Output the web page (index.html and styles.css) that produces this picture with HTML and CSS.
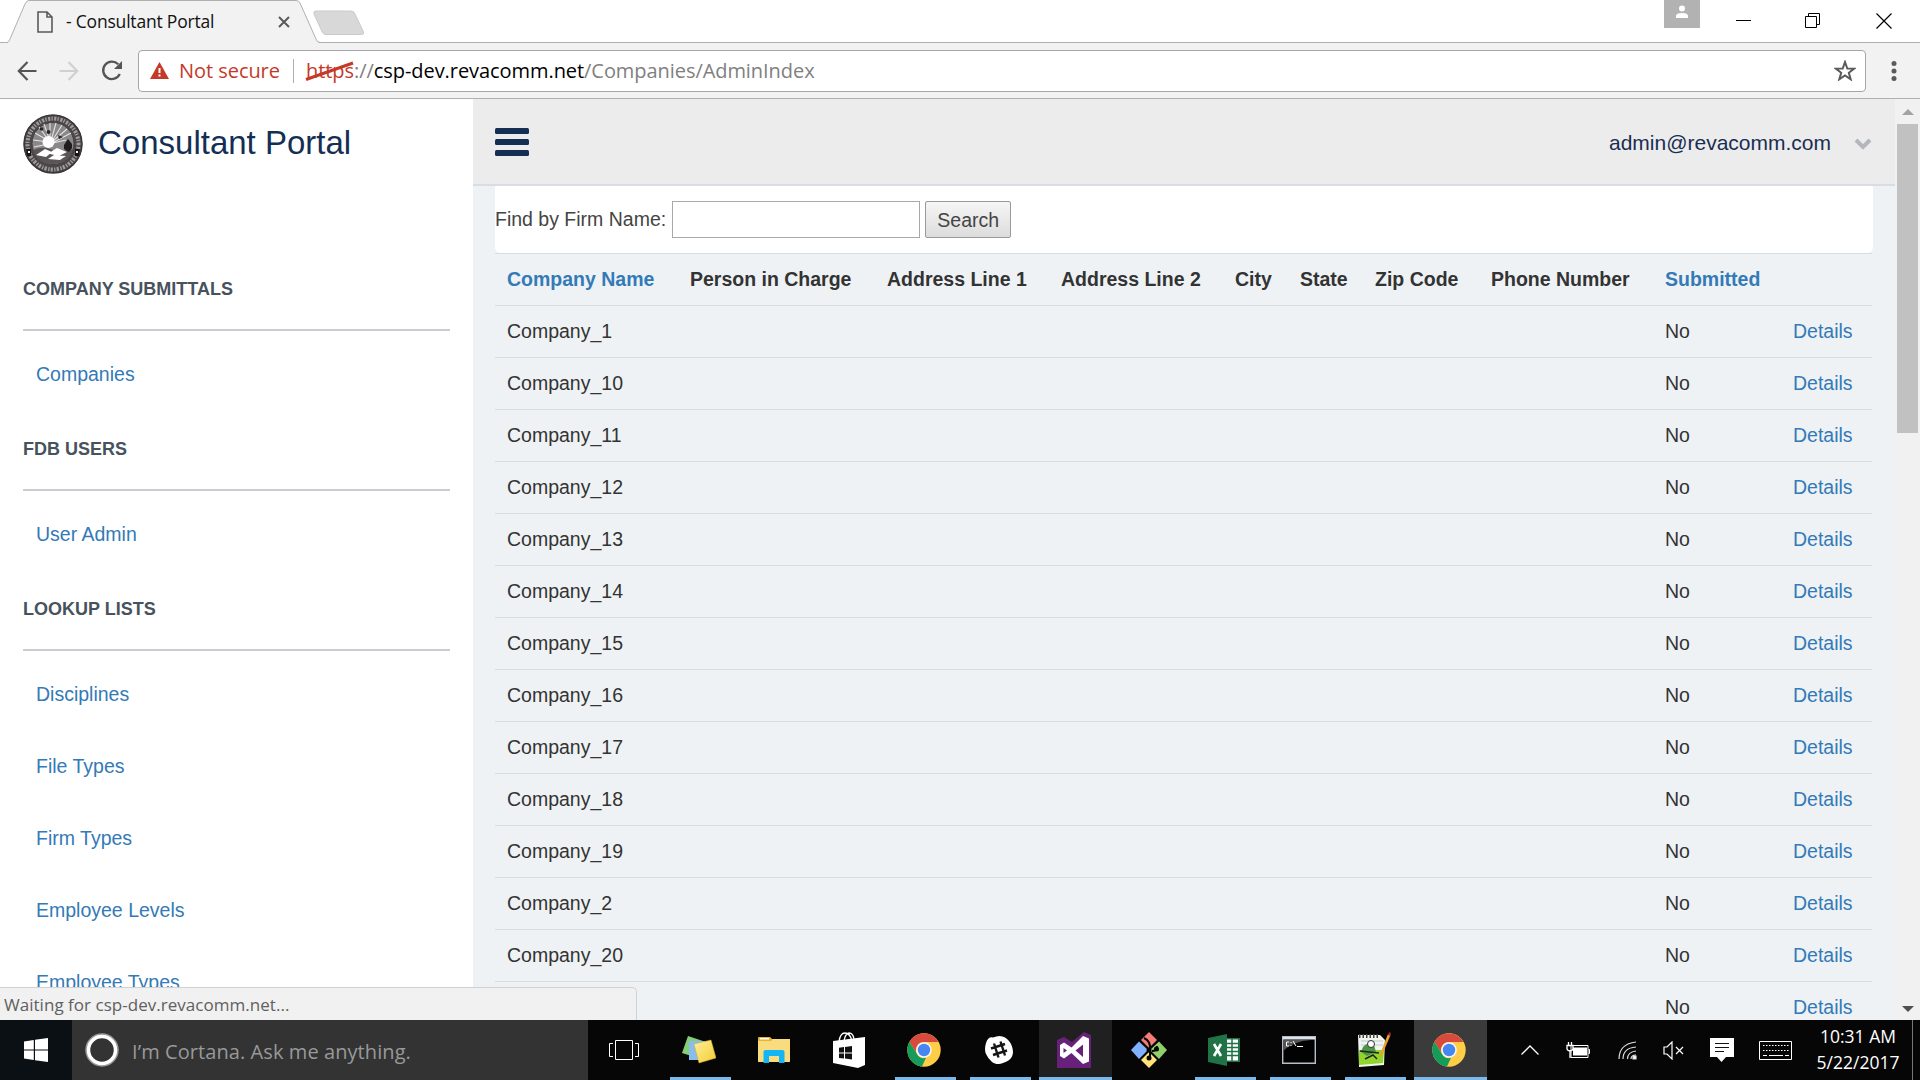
FILE: index.html
```html
<!DOCTYPE html>
<html lang="en">
<head>
<meta charset="utf-8">
<title>- Consultant Portal</title>
<link rel="stylesheet" href="styles.css">
</head>
<body>
<div class="desktop">
  <header class="titlebar">
    <div class="tab">
      <svg class="tab-shape" width="322" height="43" viewBox="0 0 322 43"><path d="M0 43 L1 42.5 Q2 42 3 39 L18 4 Q19.500 .5 22 .5 H289 Q292 .5 293 3 L309 39 Q310 42.500 312 42.500 V43Z" fill="#f2f2f2"/><path d="M0 42.500 Q2 42 3 39 L18 4 Q19.500 .5 22 .5 H289 Q292 .5 293 3 L309 39 Q310 42.500 313 42.500 H322" fill="none" stroke="#b0b0b0"/></svg>
      <svg class="page-icon" width="16" height="22" viewBox="0 0 16 22" fill="none" stroke="#5a5a5a" stroke-width="1.600"><path d="M1 1h9l5 5v15H1zM10 1v5h5"/></svg>
      <span class="tab-title">- Consultant Portal</span>
      <svg class="tab-close" width="12" height="12" viewBox="0 0 12 12" stroke="#5a5a5a" stroke-width="2"><path d="M1 1l10 10M11 1L1 11"/></svg>
    </div>
    <svg class="new-tab" width="52" height="26" viewBox="0 0 52 26"><path d="M3 1h35q3 0 4 3l8.500 18q1 2.500-2 2.500H13q-3 0-4-3L1 4q-1-3 2-3z" fill="#d8d8d8" stroke="#cacaca"/></svg>
    <div class="window-buttons">
      <div class="profile"><svg width="14" height="14" viewBox="0 0 14 14" fill="#fff"><circle cx="7" cy="3.500" r="3"/><path d="M1 13v-2q0-3 6-3t6 3v2z"/></svg></div>
      <svg class="win min" width="15" height="16" viewBox="0 0 15 16"><path d="M0 7.500h15" stroke="#000"/></svg>
      <svg class="win" width="16" height="16" viewBox="0 0 16 16" fill="none" stroke="#000"><path d="M.5 3.500h11v11H.5zM3.500 3.500V.5h11v11h-3"/></svg>
      <svg class="win" width="16" height="16" viewBox="0 0 16 16" stroke="#000" stroke-width="1.200"><path d="M.5.5l15 15M15.500.5l-15 15"/></svg>
    </div>
  </header>
  <nav class="toolbar">
    <svg class="tool back" width="20" height="20" viewBox="0 0 20 20" fill="none" stroke="#555" stroke-width="2.200"><path d="M19.500 10H2M10.500 1L1.800 10l8.700 9"/></svg>
    <svg class="tool forward" width="20" height="20" viewBox="0 0 20 20" fill="none" stroke="#d0d0d0" stroke-width="2.200"><path d="M.5 10H18M9.500 1l8.700 9-8.700 9"/></svg>
    <svg class="tool reload" width="22" height="22" viewBox="0 0 22 22"><path d="M17.200 4.300A8.700 8.700 0 1 0 18.800 14" fill="none" stroke="#555" stroke-width="2.300"/><path d="M21 1v8h-8z" fill="#555"/></svg>
    <div class="omnibox">
      <svg width="19" height="17" viewBox="0 0 19 17"><path d="M9.500 0L19 17H0z" fill="#c53929"/><path d="M9.500 6v5M9.500 12.500v2" stroke="#fff" stroke-width="2"/></svg>
      <span class="not-secure">Not secure</span>
      <span class="divider"></span>
      <span class="url"><span class="scheme">https<svg class="strike" width="50" height="20" viewBox="0 0 50 20"><path d="M1 18.500L48 2" stroke="#c53929" stroke-width="3"/></svg></span>://<span class="host">csp-dev.revacomm.net</span>/Companies/AdminIndex</span>
      <svg class="star" width="22" height="21" viewBox="0 0 22 21"><path d="M11 2l2.300 6.500 6.900.1-5.400 4.200 1.900 6.500L11 15.500l-5.700 3.800 1.900-6.500L1.800 8.600l6.900-.1z" fill="none" stroke="#5a5a5a" stroke-width="2"/></svg>
    </div>
    <svg class="dots" width="6" height="20" viewBox="0 0 6 20" fill="#5a5a5a"><circle cx="3" cy="2.500" r="2.500"/><circle cx="3" cy="10" r="2.500"/><circle cx="3" cy="17.500" r="2.500"/></svg>
  </nav>
  <div class="page">
    <aside class="sidebar">
      <div class="brand">
        <svg class="seal" width="60" height="60" viewBox="0 0 60 60"><circle cx="30" cy="30" r="29.500" fill="#4b4748"/><circle cx="30" cy="30" r="25.500" fill="none" stroke="#a09c9d" stroke-width="4" stroke-dasharray="1.300 1.500 2.200 1.200"/><circle cx="30" cy="30" r="29" fill="none" stroke="#393537" stroke-width="1.200"/><circle cx="30" cy="29.500" r="21" fill="#8b8889" stroke="#444041"/><g stroke="#e4e4e4" stroke-width="1.100"><path d="M26 27L12 19M26 27L16 13M27 27V9M27 27l-6-17M28 27l5-18M29 27l10-16M30 27l14-12M31 28l17-9M26 28L10 26M30 29l13-3M25 30l-14 3"/></g><path d="M10 36q9-4 17-1t23 0q-3 14-19 15T10 36z" fill="#5a5657"/><circle cx="25.500" cy="28" r="6" fill="#fff"/><path d="M13 41l9-6 7 3-6 5zM29 37l5-3 10 4-8 4-9-2zM25 45l6-4 12 1-6 4z" fill="#fff"/><path d="M41 31l4-6 4 5v4l-3 4-5-3z" fill="#211d1f"/><circle cx="18.500" cy="15" r="1.800" fill="#292527"/><circle cx="25.500" cy="18" r="2" fill="#292527"/><path d="M35 21l5 2-4 2z" fill="#292527"/><path d="M3 35h5v7H4zM52 35h5l-1 7h-4z" fill="#171516"/><path d="M5 37h2v2H5zM53 37h2v2h-2z" fill="#fff"/></svg>
        <h1>Consultant Portal</h1>
      </div>
      <section><h2>COMPANY SUBMITTALS</h2><a>Companies</a></section>
      <section><h2>FDB USERS</h2><a>User Admin</a></section>
      <section><h2>LOOKUP LISTS</h2><a>Disciplines</a><a>File Types</a><a>Firm Types</a><a>Employee Levels</a><a>Employee Types</a></section>
    </aside>
    <main>
      <div class="topbar">
        <svg width="34" height="28" viewBox="0 0 34 28" fill="#152f54"><rect width="34" height="6" rx="1.500"/><rect y="11" width="34" height="6" rx="1.500"/><rect y="22" width="34" height="6" rx="1.500"/></svg>
        <span class="user">admin@revacomm.com</span>
        <svg class="chevron" width="18" height="12" viewBox="0 0 18 12"><path d="M2 2l7 7 7-7" fill="none" stroke="#b3b7bb" stroke-width="4"/></svg>
      </div>
      <div class="content">
        <form class="search"><label for="firm">Find by Firm Name:</label><input id="firm" type="text"><button type="button">Search</button></form>
        <table>
          <colgroup><col class="c-name"><col class="c-person"><col class="c-addr"><col class="c-addr"><col class="c-city"><col class="c-state"><col class="c-zip"><col class="c-phone"><col class="c-sub"><col class="c-link"></colgroup>
          <thead><tr><th class="link">Company Name</th><th>Person in Charge</th><th>Address Line 1</th><th>Address Line 2</th><th>City</th><th>State</th><th>Zip Code</th><th>Phone Number</th><th class="link">Submitted</th><th></th></tr></thead>
          <tbody>
            <tr><td colspan="8">Company_1</td><td>No</td><td class="link">Details</td></tr>
            <tr><td colspan="8">Company_10</td><td>No</td><td class="link">Details</td></tr>
            <tr><td colspan="8">Company_11</td><td>No</td><td class="link">Details</td></tr>
            <tr><td colspan="8">Company_12</td><td>No</td><td class="link">Details</td></tr>
            <tr><td colspan="8">Company_13</td><td>No</td><td class="link">Details</td></tr>
            <tr><td colspan="8">Company_14</td><td>No</td><td class="link">Details</td></tr>
            <tr><td colspan="8">Company_15</td><td>No</td><td class="link">Details</td></tr>
            <tr><td colspan="8">Company_16</td><td>No</td><td class="link">Details</td></tr>
            <tr><td colspan="8">Company_17</td><td>No</td><td class="link">Details</td></tr>
            <tr><td colspan="8">Company_18</td><td>No</td><td class="link">Details</td></tr>
            <tr><td colspan="8">Company_19</td><td>No</td><td class="link">Details</td></tr>
            <tr><td colspan="8">Company_2</td><td>No</td><td class="link">Details</td></tr>
            <tr><td colspan="8">Company_20</td><td>No</td><td class="link">Details</td></tr>
            <tr><td colspan="8"></td><td>No</td><td class="link">Details</td></tr>
          </tbody>
        </table>
      </div>
    </main>
    <div class="scrollbar">
      <svg width="12" height="6" viewBox="0 0 12 6"><path d="M0 6l6-6 6 6z" fill="#a3a3a3"/></svg>
      <div class="thumb"></div>
      <svg class="down" width="12" height="6" viewBox="0 0 12 6"><path d="M0 0l6 6 6-6z" fill="#505050"/></svg>
    </div>
    <div class="status">Waiting for csp-dev.revacomm.net...</div>
  </div>
  <footer class="taskbar">
    <div class="start"><svg width="24" height="24" viewBox="0 0 24 24" fill="#fff"><path d="M0 3.400L9.800 2v9.500H0zM11 1.800L24 0v11.500H11zM0 12.500h9.800V22L0 20.600zM11 12.500h13V24l-13-1.800z"/></svg></div>
    <div class="cortana"><svg width="34" height="34" viewBox="0 0 34 34" fill="none"><circle cx="17" cy="17" r="15.500" stroke="#999" stroke-width="2.500"/><circle cx="17" cy="17" r="13.500" stroke="#fff" stroke-width="3.500"/></svg><span>I’m Cortana. Ask me anything.</span></div>
    <div class="apps">
      <div class="app taskview"><svg width="30" height="20" viewBox="0 0 30 20" fill="none" stroke="#fff"><path d="M6.500.5h17v19h-17zM4 3.500H.5v13H4M26 3.500h3.500v13H26"/></svg></div>
      <div class="app run"><svg width="34" height="28" viewBox="0 0 34 28"><defs><linearGradient id="note" x1="0" y1="0" x2="1" y2="1"><stop stop-color="#fff09a"/><stop offset="1" stop-color="#f3cd35"/></linearGradient></defs><path d="M6 0l15 5-5 17-16-5z" fill="#84cf76"/><path d="M7 5h16v19H7z" fill="#8bbdec"/><path d="M12 8l17-4 5 18-17 5z" fill="url(#note)" stroke="#d2ab22" stroke-width=".5"/></svg></div>
      <div class="app"><svg width="32" height="28" viewBox="0 0 32 28"><path d="M0 2q0-1 1-1h11l2 2h17q1 0 1 1v21q0 1-1 1H1q-1 0-1-1z" fill="#e8b531"/><path d="M0 5h13l2-2h17v22q0 1-1 1H1q-1 0-1-1z" fill="#f9dc7d"/><path d="M2 2h9v1.500H2z" fill="#fff"/><path d="M5.500 27V16q0-2 2-2h17q2 0 2 2v11H21v-7H11v7z" fill="#13b5f4"/></svg></div>
      <div class="app"><svg width="32" height="36" viewBox="0 0 32 36"><path d="M6 10Q7 1 12 1t7 8M11 9q1-7 5-8 4 0 5 6" fill="none" stroke="#fff" stroke-width="1.300"/><path d="M0 9l32-4v28l-7 3L0 31z" fill="#fff"/><path d="M6 15.800l5-.7v5.400H6zM12 15l7-1v6.500h-7zM6 21.500h5v5l-5-.6zM12 21.500h7v6l-7-.9z" fill="#111"/></svg></div>
      <div class="app run"><svg width="34" height="34" viewBox="0 0 34 34"><g id="chrome"><circle cx="17" cy="17" r="16.700" fill="#ffcd46"/><path d="M2.500 8.700A16.700 16.700 0 0 1 31.500 9H17a8 8 0 0 0-7 12z" fill="#d84a3e"/><path d="M2.500 8.700l7.600 12.500A8 8 0 0 0 19 24.800l-4 8.800A16.700 16.700 0 0 1 2.500 8.700z" fill="#159c5a"/><circle cx="17" cy="17" r="7.800" fill="#f5f5f5"/><circle cx="17" cy="17" r="6.200" fill="#4586f0"/></g></svg></div>
      <div class="app run"><svg width="28" height="28" viewBox="0 0 28 28"><path d="M8 1.500q7-3 12 0t7 9 0 10-9 6.500-11-1-6-8 0-11 7-5.500z" fill="#fff"/><path d="M9 7.500l4.500 14M15.500 5.500l4.500 14M6 12.500l14-4.500M8 19l14-4.500" stroke="#151515" stroke-width="2.400"/></svg></div>
      <div class="app run active vs"><svg width="34" height="36" viewBox="0 0 34 36"><path d="M0 8l7-3 8 5L27 0l7 3v33H0z" fill="#68217a"/><path d="M3 13l4-2.500 7.500 5L26 4l6 2.500v23L26 32 14.500 21 7 26.500 3 24zm3.500 3v5l3.500-2.500zM26 12.500l-7.500 6L26 25z" fill="#fff" fill-rule="evenodd"/></svg></div>
      <div class="app"><svg width="36" height="36" viewBox="0 0 36 36"><path d="M18 0l8 8-8 8-8-8z" fill="#f77b77"/><path d="M8 9.500l9 8.500-9 9L0 18z" fill="#80b1ff"/><path d="M28 9.500l8 8.500-8 9-9-9z" fill="#90d069"/><path d="M18 20l8 8-8 8-8-8z" fill="#ffe47a"/><path d="M13 6q7 3 6 12v9M21 19q5 0 5-5" fill="none" stroke="#050505" stroke-width="2"/><circle cx="18" cy="18" r="2.500" fill="#050505"/><circle cx="25.500" cy="17" r="2.500" fill="#050505"/><circle cx="18" cy="26" r="2.500" fill="#050505"/></svg></div>
      <div class="app run"><svg width="32" height="32" viewBox="0 0 32 32"><path d="M17 4h15v24H17z" fill="#1f7245"/><path d="M18 5.500h12v21H18z" fill="#fff"/><path d="M24 5v22M18 9.500h12M18 13.500h12M18 17.500h12M18 21.500h12" stroke="#1f7245" stroke-width="1.500"/><path d="M0 4l19-4v32L0 28z" fill="#207346"/><path d="M6 10l7 12M13 10L6 22" stroke="#fff" stroke-width="2.600"/></svg></div>
      <div class="app run"><svg width="34" height="28" viewBox="0 0 34 28"><path d="M.7.7h32.600v26.600H.7z" fill="#020202" stroke="#b8bec5" stroke-width="1.400"/><path d="M1 1h32v2.500H1z" fill="#dce3eb"/><path d="M1 4h28q-17 1-28 11z" fill="#555"/><path d="M7 6H4.500v4H7M9 6v1M9 9v1M11 5l3 5M15 10.500h6" fill="none" stroke="#fff"/></svg></div>
      <div class="app run"><svg width="34" height="36" viewBox="0 0 34 36"><path d="M1 3h22l5 5-1 25-25 2z" fill="#f1f5ee"/><path d="M2 18h25l-1 13-24 2z" fill="#92d52d"/><path d="M2 3h21M2 5h21" stroke="#444" stroke-width="2" stroke-dasharray="1.500 2"/><path d="M4 9h22M4 13h22" stroke="#b7cddb"/><path d="M6 15q5-6 11-2l2 7-9 4-6-4z" fill="#4c9745"/><circle cx="14" cy="12" r="3.500" fill="#fff" stroke="#333"/><path d="M3 19l19 2M8 27l8-4 4 4" stroke="#222" stroke-width="1.500" fill="none"/><path d="M22 26l1.500-5L31 2l2.500 1-8 19z" fill="#e9a328"/><path d="M31 3l1-3 2 1-.5 3z" fill="#a3202d"/></svg></div>
      <div class="app run active"><svg width="34" height="34" viewBox="0 0 34 34"><use href="#chrome"/></svg></div>
    </div>
    <div class="tray">
      <svg class="caret" width="18" height="10" viewBox="0 0 18 10" fill="none" stroke="#fff" stroke-width="1.300"><path d="M.5 9.500L9 1l8.500 8.500"/></svg>
      <svg class="battery" width="24" height="18" viewBox="0 0 24 18"><path d="M5 4.500h17v12H5zM22.500 8.500h1v4h-1" fill="none" stroke="#fff"/><path d="M7 6.500h14v8H7z" fill="#fff"/><path d="M2.500 1v3M5.500 1v3M1 4.500h6v3q0 2-3 2.500-3-.5-3-2.500zM4 10v7" fill="none" stroke="#fff" stroke-width="1.300"/></svg>
      <svg class="wifi" width="19" height="19" viewBox="0 0 19 19" fill="none" stroke="#ddd" stroke-width="1.200"><path d="M1 18Q1 3 18 1M5 18Q5 7 18 6M9.500 18q0-7 8.500-8M13 18q0-4 5-4"/><path d="M15 15h3v3h-3z" fill="#fff"/></svg>
      <svg class="volume" width="21" height="19" viewBox="0 0 21 19" fill="none" stroke="#fff" stroke-width="1.200"><path d="M1 6h3l5-5v17l-5-5H1zM13 6l7 7M20 6l-7 7"/></svg>
      <svg class="message" width="24" height="24" viewBox="0 0 24 24"><path d="M0 0h24v19h-8l-4.500 5L7 19H0z" fill="#fff"/><path d="M5 5.500h14M5 9.500h14M5 13.500h9" stroke="#111"/></svg>
      <svg class="keyboard" width="33" height="19" viewBox="0 0 33 19" fill="none" stroke="#fff"><path d="M.5.500h32v18H.5z"/><path d="M4 4.500h26M4 9.500h26" stroke-dasharray="1.500 1.500"/><path d="M4 14.500h4M10 14.500h14M26 14.500h4"/></svg>
      <div class="clock"><span>10:31 AM</span><span>5/22/2017</span></div>
      <span class="show-desktop"></span>
    </div>
  </footer>
</div>
</body>
</html>
```

FILE: styles.css
```css
* { box-sizing: border-box; }
body { margin: 0; font-family: "Liberation Sans", Arial, sans-serif; overflow: hidden; }
svg { display: block; flex: none; }
.desktop { width: 1920px; height: 1080px; display: flex; flex-direction: column; background: #fff; }

/* Browser chrome */
.titlebar { height: 43px; flex: none; display: flex; border-bottom: 1px solid #b0b0b0; font-family: "Open Sans", "Noto Sans", sans-serif; }
.tab { position: relative; width: 322px; height: 43px; margin-left: 7px; display: flex; align-items: center; padding-left: 30px; }
.tab-shape { position: absolute; left: 0; top: 0; }
.page-icon, .tab-title, .tab-close { position: relative; }
.tab-title { margin-left: 13px; width: 212px; padding-bottom: 1px; font-size: 17.500px; letter-spacing: -.2px; color: #111; white-space: nowrap; }
.new-tab { margin: 10px 0 0 -16px; }
.window-buttons { margin-left: auto; display: flex; padding-right: 28px; }
.profile { width: 36px; height: 28px; background: #b2b2b2; display: flex; justify-content: center; padding-top: 5px; margin-right: 36px; }
.win { margin-top: 13px; margin-left: 55px; }
.win.min { margin-left: 0; margin-right: -1px; }
.toolbar { height: 56px; flex: none; display: flex; align-items: center; background: #f2f2f2; border-bottom: 1px solid #b0b0b0; font-family: "Open Sans", "Noto Sans", sans-serif; padding-left: 17px; }
.forward { margin-left: 22px; }
.reload { margin-left: 22px; }
.omnibox { margin-left: 15px; width: 1728px; height: 42px; border: 1px solid #a6a6a6; border-radius: 4px; background: #fff; display: flex; align-items: center; padding-left: 11px; font-size: 20px; white-space: nowrap; }
.not-secure { color: #c53929; width: 101px; margin-left: 10px; letter-spacing: -.05px; }
.divider { width: 1px; height: 24px; background: #b0b0b0; margin: 0 12px 0 13px; }
.url { color: #808080; letter-spacing: -.06px; }
.scheme { position: relative; color: #c53929; }
.strike { position: absolute; left: -1px; top: 4px; }
.host { color: #000; }
.star { margin-left: auto; margin-right: 9px; }
.dots { margin-left: 25px; }

/* Web page */
.page { position: relative; flex: 1; min-height: 0; display: flex; overflow: hidden; }
.sidebar { width: 473px; flex: none; padding: 0 23px; }
.brand { display: flex; height: 151px; padding-top: 15px; gap: 15px; }
.brand h1 { margin: 0; font-size: 33px; font-weight: 400; line-height: 58px; color: #152f54; white-space: nowrap; }
.sidebar section h2 { margin: 0 0 7px; height: 81px; padding-top: 27px; border-bottom: 2px solid #c9cdd1; font-size: 18px; line-height: 24px; color: #47525d; }
.sidebar a { display: block; height: 72px; line-height: 72px; padding-left: 13px; font-size: 19.500px; color: #337ab7; }
main { width: 1422px; flex: none; background: #eef2f5; }
.topbar { height: 87px; background: #ececec; border-bottom: 2px solid #d9dde3; display: flex; align-items: center; padding: 0 23px 0 22px; }
.user { margin-left: auto; padding-top: 3px; font-size: 21px; color: #1a2e52; }
.chevron { margin: 5px 0 0 23px; }
.content { padding: 0 22px; }
.search { height: 67px; background: #fff; border-radius: 0 0 6px 6px; display: flex; align-items: center; font-size: 19.500px; color: #444; }
.search input { width: 248px; height: 37px; margin-left: 6px; border: 1px solid #a9a9a9; padding: 0; }
.search button { width: 86px; height: 37px; margin-left: 5px; padding: 2px 0 0; border: 1px solid #999; border-radius: 2px; background: linear-gradient(#f6f6f6, #dcdcdc); font: 19.500px "Liberation Sans", Arial, sans-serif; color: #444; }
table { width: 1377px; table-layout: fixed; border-collapse: separate; border-spacing: 0; font-size: 19.500px; color: #333; }
th, td { height: 52px; padding: 0 0 2px 12px; border-top: 1px solid #d9dde2; text-align: left; line-height: 24px; white-space: nowrap; }
.link { color: #337ab7; }
.c-name { width: 183px; }
.c-person { width: 197px; }
.c-addr { width: 174px; }
.c-city { width: 65px; }
.c-state { width: 75px; }
.c-zip { width: 116px; }
.c-phone { width: 174px; }
.c-sub { width: 128px; }
.c-link { width: 91px; }
.scrollbar { width: 25px; background: #f1f1f1; display: flex; flex-direction: column; align-items: center; padding: 10px 0 8px; }
.thumb { width: 21px; height: 309px; margin-top: 9px; background: #c1c1c1; }
.down { margin-top: auto; }
.status { position: absolute; left: 0; bottom: 0; width: 637px; height: 33px; border: 1px solid #cfd2d5; border-width: 1px 1px 0 0; border-radius: 0 5px 0 0; background: #f1f1f1; padding-left: 4px; font: 17px/34px "Open Sans", "Noto Sans", sans-serif; letter-spacing: .03px; color: #606060; }

/* Windows taskbar */
.taskbar { height: 60px; flex: none; display: flex; background: #060606; font-family: "Open Sans", "Noto Sans", sans-serif; }
.start { width: 72px; background: #0b1015; display: flex; align-items: center; justify-content: center; }
.cortana { width: 516px; background: #333; display: flex; align-items: center; padding-left: 13px; gap: 13px; font-size: 20px; letter-spacing: .08px; color: #999; }
.cortana span { padding-top: 2px; }
.apps { display: flex; gap: 2px; padding-left: 1px; }
.app { width: 73px; height: 60px; display: flex; align-items: center; justify-content: center; padding-right: 3px; }
.run { background: linear-gradient(#78b9ee, #78b9ee) center bottom / 61px 3px no-repeat; }
.run.active { background: linear-gradient(#78b9ee, #78b9ee) center bottom / 73px 3px no-repeat, #3b3b3b; }
.run.vs { background-color: #202020; }
.tray { margin-left: auto; display: flex; align-items: center; }
.battery { margin-left: 27px; }
.wifi { margin-left: 28px; }
.volume { margin-left: 26px; }
.message { margin-left: 26px; }
.keyboard { margin-left: 25px; }
.clock { width: 102px; margin-left: 15px; padding-bottom: 2px; display: flex; flex-direction: column; text-align: center; font-size: 17.500px; line-height: 26px; color: #fff; }
.show-desktop { width: 8px; height: 60px; margin-left: 3px; border-left: 1px solid #777; }
```
